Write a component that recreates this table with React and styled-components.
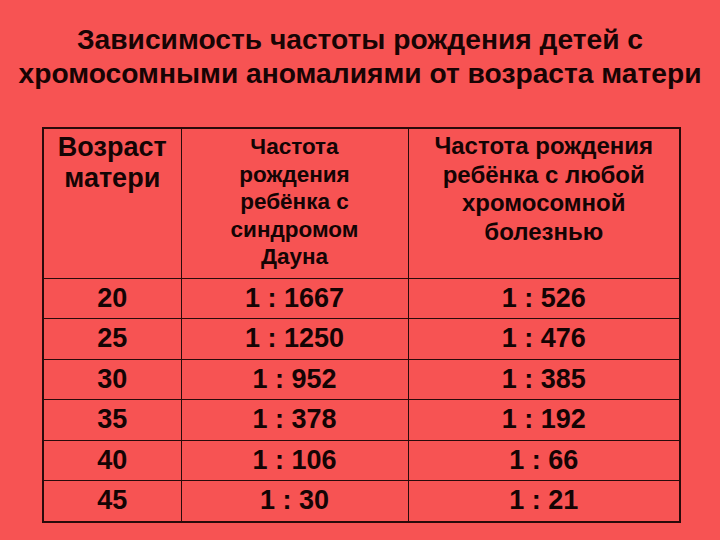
import React from "react";
import styled, { createGlobalStyle } from "styled-components";

const GlobalStyle = createGlobalStyle`
  html, body {
    margin: 0;
    padding: 0;
    background: #f75353;
  }
  body {
    font-family: "Liberation Sans", Arial, sans-serif;
    color: #140404;
  }
`;

const Slide = styled.div`
  width: 720px;
  height: 540px;
  background: #f75353;
  display: flex;
  flex-direction: column;
  align-items: center;
  padding-top: 22px;
  box-sizing: border-box;
`;

const Title = styled.h1`
  margin: 0;
  font-family: "Liberation Sans", Arial, sans-serif;
  font-weight: bold;
  font-size: 28.2px;
  line-height: 34px;
  text-align: center;
  color: #180404;
  white-space: nowrap;
`;

const TableWrap = styled.div`
  margin-top: 37px;
  align-self: flex-start;
  margin-left: 42px;
`;

const Table = styled.table`
  border-collapse: collapse;
  border: 2px solid #2a0a0a;
  table-layout: fixed;
  width: 637px;
`;

const sizes = {
  age: { font: "27px", line: "31px", top: "3px" },
  down: { font: "22.5px", line: "27.5px", top: "4px" },
  any: { font: "24px", line: "28.5px", top: "3px" },
};

const HeadCell = styled.th`
  border: 1px solid #2a0a0a;
  vertical-align: top;
  text-align: center;
  font-weight: bold;
  font-size: ${(p) => sizes[p.$kind].font};
  line-height: ${(p) => sizes[p.$kind].line};
  padding: ${(p) => sizes[p.$kind].top} 2px 0;
  height: 150px;
  box-sizing: border-box;
  white-space: nowrap;
`;

const Cell = styled.td`
  border: 1px solid #2a0a0a;
  text-align: center;
  font-weight: bold;
  font-size: 27px;
  height: 39.5px;
  padding: 0;
  line-height: 39px;
`;

const rows = [
  ["20", "1 : 1667", "1 : 526"],
  ["25", "1 : 1250", "1 : 476"],
  ["30", "1 : 952", "1 : 385"],
  ["35", "1 : 378", "1 : 192"],
  ["40", "1 : 106", "1 : 66"],
  ["45", "1 : 30", "1 : 21"],
];

export default function App() {
  return (
    <>
      <GlobalStyle />
      <Slide>
        <Title>
          Зависимость частоты рождения детей с<br />
          хромосомными аномалиями от возраста матери
        </Title>
        <TableWrap>
          <Table>
            <colgroup>
              <col style={{ width: 138 }} />
              <col style={{ width: 227 }} />
              <col style={{ width: 272 }} />
            </colgroup>
            <thead>
              <tr>
                <HeadCell $kind="age">
                  Возраст<br />матери
                </HeadCell>
                <HeadCell $kind="down">
                  Частота<br />рождения<br />ребёнка с<br />синдромом<br />Дауна
                </HeadCell>
                <HeadCell $kind="any">
                  Частота рождения<br />ребёнка с любой<br />хромосомной<br />болезнью
                </HeadCell>
              </tr>
            </thead>
            <tbody>
              {rows.map((r) => (
                <tr key={r[0]}>
                  <Cell>{r[0]}</Cell>
                  <Cell>{r[1]}</Cell>
                  <Cell>{r[2]}</Cell>
                </tr>
              ))}
            </tbody>
          </Table>
        </TableWrap>
      </Slide>
    </>
  );
}
